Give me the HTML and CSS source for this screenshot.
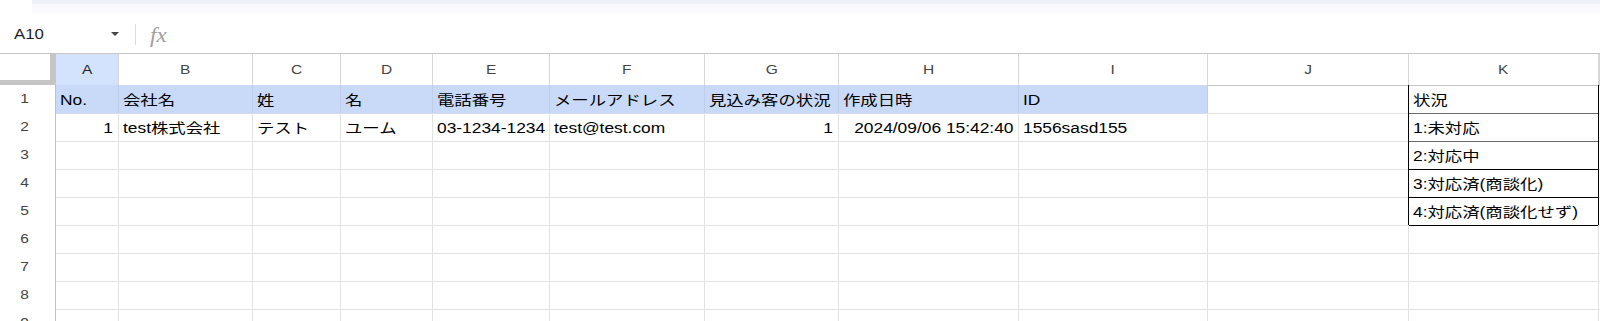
FILE: index.html
```html
<!DOCTYPE html>
<html lang="ja">
<head>
<meta charset="utf-8">
<title>Sheet</title>
<link rel="stylesheet" href="styles.css">
</head>
<body>
<div class="app">
  <div class="topband"><div class="topband-left"></div><div class="topband-main"></div></div>
  <div class="formula-bar">
    <div class="namebox"><span class="tx">A10</span><span class="caret"></span></div>
    <div class="fsep"></div>
    <div class="fx">fx</div>
  </div>
  <div class="sheet">
    <div class="row colhead">
      <div class="corner"></div>
      <div class="ch sel"><span class="tx">A</span></div>
      <div class="ch"><span class="tx">B</span></div>
      <div class="ch"><span class="tx">C</span></div>
      <div class="ch"><span class="tx">D</span></div>
      <div class="ch"><span class="tx">E</span></div>
      <div class="ch"><span class="tx">F</span></div>
      <div class="ch"><span class="tx">G</span></div>
      <div class="ch"><span class="tx">H</span></div>
      <div class="ch"><span class="tx">I</span></div>
      <div class="ch"><span class="tx">J</span></div>
      <div class="ch"><span class="tx">K</span></div>
      <div class="ch"></div>
    </div>
    <div class="row">
      <div class="rh"><span class="tx">1</span></div>
      <div class="c fill"><span class="tx">No.</span></div>
      <div class="c fill"><span class="tx">会社名</span></div>
      <div class="c fill"><span class="tx">姓</span></div>
      <div class="c fill"><span class="tx">名</span></div>
      <div class="c fill"><span class="tx">電話番号</span></div>
      <div class="c fill"><span class="tx">メールアドレス</span></div>
      <div class="c fill"><span class="tx">見込み客の状況</span></div>
      <div class="c fill"><span class="tx">作成日時</span></div>
      <div class="c fill"><span class="tx">ID</span></div>
      <div class="c kl"></div>
      <div class="c k kgrey"><span class="tx">状況</span></div>
      <div class="c"></div>
    </div>
    <div class="row">
      <div class="rh"><span class="tx">2</span></div>
      <div class="c num"><span class="tx">1</span></div>
      <div class="c"><span class="tx">test株式会社</span></div>
      <div class="c"><span class="tx">テスト</span></div>
      <div class="c"><span class="tx">ユーム</span></div>
      <div class="c"><span class="tx">03-1234-1234</span></div>
      <div class="c"><span class="tx">test@test.com</span></div>
      <div class="c num"><span class="tx">1</span></div>
      <div class="c num"><span class="tx">2024/09/06 15:42:40</span></div>
      <div class="c"><span class="tx">1556sasd155</span></div>
      <div class="c kl"></div>
      <div class="c k kgrey"><span class="tx">1:未対応</span></div>
      <div class="c"></div>
    </div>
    <div class="row">
      <div class="rh"><span class="tx">3</span></div>
      <div class="c"></div><div class="c"></div><div class="c"></div><div class="c"></div><div class="c"></div>
      <div class="c"></div><div class="c"></div><div class="c"></div><div class="c"></div>
      <div class="c kl"></div>
      <div class="c k"><span class="tx">2:対応中</span></div>
      <div class="c"></div>
    </div>
    <div class="row">
      <div class="rh"><span class="tx">4</span></div>
      <div class="c"></div><div class="c"></div><div class="c"></div><div class="c"></div><div class="c"></div>
      <div class="c"></div><div class="c"></div><div class="c"></div><div class="c"></div>
      <div class="c kl"></div>
      <div class="c k"><span class="tx">3:対応済(商談化)</span></div>
      <div class="c"></div>
    </div>
    <div class="row">
      <div class="rh"><span class="tx">5</span></div>
      <div class="c"></div><div class="c"></div><div class="c"></div><div class="c"></div><div class="c"></div>
      <div class="c"></div><div class="c"></div><div class="c"></div><div class="c"></div>
      <div class="c kl"></div>
      <div class="c k"><span class="tx">4:対応済(商談化せず)</span></div>
      <div class="c"></div>
    </div>
    <div class="row">
      <div class="rh"><span class="tx">6</span></div>
      <div class="c"></div><div class="c"></div><div class="c"></div><div class="c"></div><div class="c"></div>
      <div class="c"></div><div class="c"></div><div class="c"></div><div class="c"></div><div class="c"></div>
      <div class="c"></div><div class="c"></div>
    </div>
    <div class="row">
      <div class="rh"><span class="tx">7</span></div>
      <div class="c"></div><div class="c"></div><div class="c"></div><div class="c"></div><div class="c"></div>
      <div class="c"></div><div class="c"></div><div class="c"></div><div class="c"></div><div class="c"></div>
      <div class="c"></div><div class="c"></div>
    </div>
    <div class="row">
      <div class="rh"><span class="tx">8</span></div>
      <div class="c"></div><div class="c"></div><div class="c"></div><div class="c"></div><div class="c"></div>
      <div class="c"></div><div class="c"></div><div class="c"></div><div class="c"></div><div class="c"></div>
      <div class="c"></div><div class="c"></div>
    </div>
    <div class="row">
      <div class="rh"><span class="tx">9</span></div>
      <div class="c"></div><div class="c"></div><div class="c"></div><div class="c"></div><div class="c"></div>
      <div class="c"></div><div class="c"></div><div class="c"></div><div class="c"></div><div class="c"></div>
      <div class="c"></div><div class="c"></div>
    </div>
  </div>
</div>
</body>
</html>
```

FILE: styles.css
```css
* { box-sizing: border-box; }
html, body { margin: 0; padding: 0; background: #fff; }
body { width: 1600px; height: 321px; overflow: hidden; font-family: "Liberation Sans", "Noto Sans CJK JP", sans-serif; color: #000; }
.app { width: 1600px; }

.tx { display: inline-block; white-space: nowrap; transform: scaleX(1.24); transform-origin: left center; }

.topband { display: flex; height: 15px; }
.topband-left { width: 32px; background: #fff; }
.topband-main { flex: 1; background: linear-gradient(#eef1fa 0, #eef1fa 4px, #f8f8fd 4px, #fdfdfe 15px); }

.formula-bar { display: flex; align-items: center; height: 39px; border-bottom: 1px solid #c4c7c5; background: #fff; }
.namebox { display: flex; align-items: center; width: 122px; padding-left: 14px; font-size: 15px; color: #1f1f1f; line-height: 16px; }
.namebox .tx { transform: scaleX(1.12); }
.caret { margin-left: auto; margin-right: 3px; width: 0; height: 0; border-left: 4.5px solid transparent; border-right: 4.5px solid transparent; border-top: 4.5px solid #444; }
.fsep { width: 1px; height: 21px; background: #dcdcdc; margin-left: 13px; }
.fx { margin-left: 14px; font-family: "Liberation Serif", serif; font-style: italic; font-size: 20px; color: #9e9e9e; margin-top: 2px; transform: scaleX(1.15); transform-origin: left center; }

.row { display: grid; grid-template-columns: 56px 63px 134px 88px 92px 117px 155px 134px 180px 189px 201px 190px 1fr; height: 28px; }
.row.colhead { height: 31px; }

.corner { background: #fff; border-right: 6px solid #c5c5c5; border-bottom: 5px solid #c5c5c5; height: 31px; }
.ch { display: flex; justify-content: center; align-items: center; font-size: 12.5px; color: #444; border-right: 1px solid #d6d6d6; border-bottom: 1px solid #c4c7c5; background: #fff; line-height: 30px; padding-top: 1px; }
.ch .tx { transform-origin: center; }
.ch.sel { background: #d3e3fd; color: #1f1f1f; }

.rh { display: flex; justify-content: center; font-size: 12.5px; color: #444; border-right: 1px solid #c0c0c0; border-bottom: 1px solid #cfcfcf; padding-right: 6px; line-height: 27px; padding-top: 1px; background: #fff; }
.rh .tx { transform-origin: center; }

.c { font-size: 14px; line-height: 23px; padding: 4px 4px 0 4px; border-right: 1px solid #e2e2e2; border-bottom: 1px solid #e2e2e2; overflow: visible; white-space: nowrap; }
.c.num { text-align: right; padding-right: 5px; }
.c.num .tx { transform-origin: right center; }
.c.fill { background: #c9daf8; border-right-color: #bfcde8; border-bottom-color: #d3dbea; }
.c.kl { border-right-color: #000; }
.c.k { border-right-color: #000; border-bottom-color: #000; padding-left: 4px; }
.c.k.kgrey { border-bottom-color: #6a6a6a; }
```
